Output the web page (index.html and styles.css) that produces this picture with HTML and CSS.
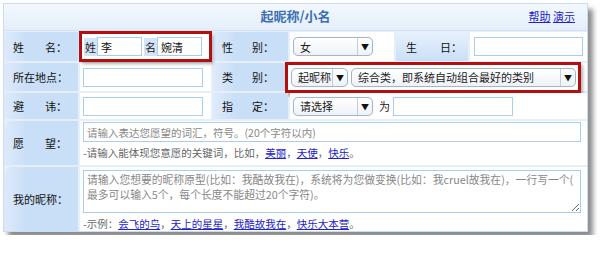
FILE: index.html
```html
<!DOCTYPE html>
<html lang="zh-CN">
<head>
  <meta charset="UTF-8" />
  <title>起昵称/小名</title>
  <link rel="stylesheet" href="styles.css">
</head>
<body>
  <div class="panel">
    <div class="title">
      <span class="title-text">起昵称/小名</span>
      <span class="title-links"><a href="#">帮助</a> <a href="#">演示</a></span>
    </div>

    <div class="grid">
      <div class="label">姓<span class="sp2"></span>名：</div>
      <div class="field hl">
        <span class="chip">姓</span><input class="txt short" type="text" value="李" />
        <span class="chip">名</span><input class="txt short" type="text" value="婉清" />
      </div>
      <div class="label col2">性<span class="sp1"></span>别：</div>
      <div class="field">
        <div class="select w80"><span class="sel-val">女</span><span class="sel-arrow">▼</span></div>
      </div>
      <div class="label fade">生<span class="sp3"></span>日：</div>
      <div class="field"><input class="txt bday" type="text" /></div>

      <div class="label">所在地点：</div>
      <div class="field"><input class="txt mid" type="text" /></div>
      <div class="label col2">类<span class="sp1"></span>别：</div>
      <div class="field span3">
        <div class="hl-box">
          <div class="select w57"><span class="sel-val">起昵称</span><span class="sel-arrow">▼</span></div>
          <div class="select grow"><span class="sel-val">综合类，即系统自动组合最好的类别</span><span class="sel-arrow">▼</span></div>
        </div>
      </div>

      <div class="label">避<span class="sp2"></span>讳：</div>
      <div class="field"><input class="txt mid" type="text" /></div>
      <div class="label col2">指<span class="sp1"></span>定：</div>
      <div class="field span3">
        <div class="select w80"><span class="sel-val">请选择</span><span class="sel-arrow">▼</span></div>
        <span class="for">为</span>
        <input class="txt mid" type="text" />
      </div>

      <div class="label tall">愿<span class="sp2"></span>望：</div>
      <div class="field span5 stack">
        <input class="txt wide" type="text" placeholder="请输入表达您愿望的词汇，符号。(20个字符以内)" />
        <p class="hint">-请输入能体现您意愿的关键词，比如，<a href="#">美丽</a>，<a href="#">天使</a>，<a href="#">快乐</a>。</p>
      </div>

      <div class="label tall">我的昵称：</div>
      <div class="field span5 stack">
        <textarea class="area" placeholder="请输入您想要的昵称原型(比如：我酷故我在)，系统将为您做变换(比如：我cruel故我在)，一行写一个(&#10;最多可以输入5个，每个长度不能超过20个字符)。"></textarea>
        <p class="hint">-示例：<a href="#">会飞的鸟</a>，<a href="#">天上的星星</a>，<a href="#">我酷故我在</a>，<a href="#">快乐大本营</a>。</p>
      </div>
    </div>
  </div>
</body>
</html>
```

FILE: styles.css
```css
body {
  margin: 0;
  padding: 3px;
  background: #fff;
  font-family: "Noto Sans CJK SC", "DejaVu Sans", sans-serif;
  font-size: 11px;
  color: #222;
}
.panel {
  width: 583px;
  border: 1px solid #c9dcf1;
  background: #fff;
  box-shadow: 5px 6px 5px rgba(0,0,0,0.45);
}
.title {
  height: 26px;
  display: flex;
  align-items: center;
  justify-content: center;
  position: relative;
  background: linear-gradient(#f3f8fe, #e4eefa);
  border-bottom: 1px solid #d3e3f5;
}
.title-text {
  font-weight: bold;
  font-size: 13px;
  color: #3d6fb3;
  margin-top: -3px;
}
.title-links {
  position: absolute;
  right: 12px;
  top: 4px;
  font-size: 11px;
}
.title-links a, .hint a {
  color: #2222cc;
  text-decoration: underline;
}
.grid {
  display: grid;
  grid-template-columns: 74px 131px 75px 104px 72px 1fr;
  grid-template-rows: 29px 28px 26px 44px 64px;
  gap: 2px;
  background: #e6eff9;
  padding-top: 1px;
}
.label {
  background: linear-gradient(90deg, #dfeafb, #c9dff7 30%, #c9dff7);
  border-radius: 4px 0 0 0;
  display: flex;
  align-items: center;
  padding-left: 9px;
  font-size: 11px;
  color: #111;
}
.label.tall { border-radius: 8px 0 0 0; }
.label.fade {
  background: linear-gradient(#e8f1fc, #c9dff7);
  padding-left: 10px;
}
.sp1 { display: inline-block; width: 19px; }
.sp2 { display: inline-block; width: 21px; }
.sp3 { display: inline-block; width: 23px; }
.field {
  background: #fff;
  display: flex;
  align-items: center;
  padding-left: 3px;
  gap: 3px;
}
.span3 { grid-column: span 3; }
.span5 { grid-column: span 5; }
.stack {
  flex-direction: column;
  align-items: flex-start;
  justify-content: flex-start;
  padding-top: 1px;
  gap: 0;
}
.hl {
  outline: 3px solid #b40f0f;
  outline-offset: -2px;
  box-shadow: 2px 3px 3px rgba(0,0,0,0.3);
  position: relative;
  z-index: 1;
  padding-left: 4px;
  gap: 0;
}
.chip {
  background: #d3e4f8;
  height: 18px;
  line-height: 18px;
  padding: 0 1px;
  font-size: 11px;
}
.hl .chip + .txt { margin-right: 2px; }
.txt {
  height: 19px;
  box-sizing: border-box;
  border: 1px solid #a8cdf1;
  font-family: inherit;
  font-size: 11px;
  padding: 0 3px;
  color: #111;
  outline: none;
}
.short { width: 45px; }
.mid { width: 120px; }
.bday { width: 109px; margin-left: 1px; }
.wide { width: 498px; height: 20px; font-size: 10.5px; }
.txt::placeholder, .area::placeholder { color: #888; }
.area {
  width: 498px;
  height: 45px;
  margin-top: 2px;
  box-sizing: border-box;
  border: 1px solid #a8cdf1;
  font-family: inherit;
  font-size: 10.8px;
  line-height: 15px;
  padding: 1px 3px;
  resize: both;
  color: #111;
  white-space: pre-wrap;
}
.hint {
  margin: 4px 0 0 0;
  font-size: 10.5px;
  line-height: 14px;
  color: #666;
}
.select {
  height: 19px;
  box-sizing: border-box;
  border: 1px solid #a3b5cb;
  border-radius: 5px;
  background: linear-gradient(#ffffff, #eef2f7);
  display: flex;
  align-items: center;
  font-size: 11px;
  box-shadow: 0 0 1px #c5d7ec;
}
.w80 { width: 80px; }
.w57 { width: 57px; }
.grow { flex: 1; }
.sel-val {
  flex: 1;
  padding-left: 6px;
  white-space: nowrap;
  overflow: hidden;
}
.sel-arrow {
  width: 14px;
  height: 100%;
  border-left: 1px solid #c2cede;
  display: flex;
  align-items: center;
  justify-content: center;
  font-size: 8px;
  color: #111;
}
.hl-box {
  display: flex;
  gap: 3px;
  box-sizing: border-box;
  width: 296px;
  margin-left: -8px;
  padding: 3px 2px 3px 3px;
  border: 3px solid #b40f0f;
  box-shadow: 2px 3px 3px rgba(0,0,0,0.3);
  background: #fff;
}
.for {
  margin: 0 0 0 3px;
  font-size: 11px;
}
```
